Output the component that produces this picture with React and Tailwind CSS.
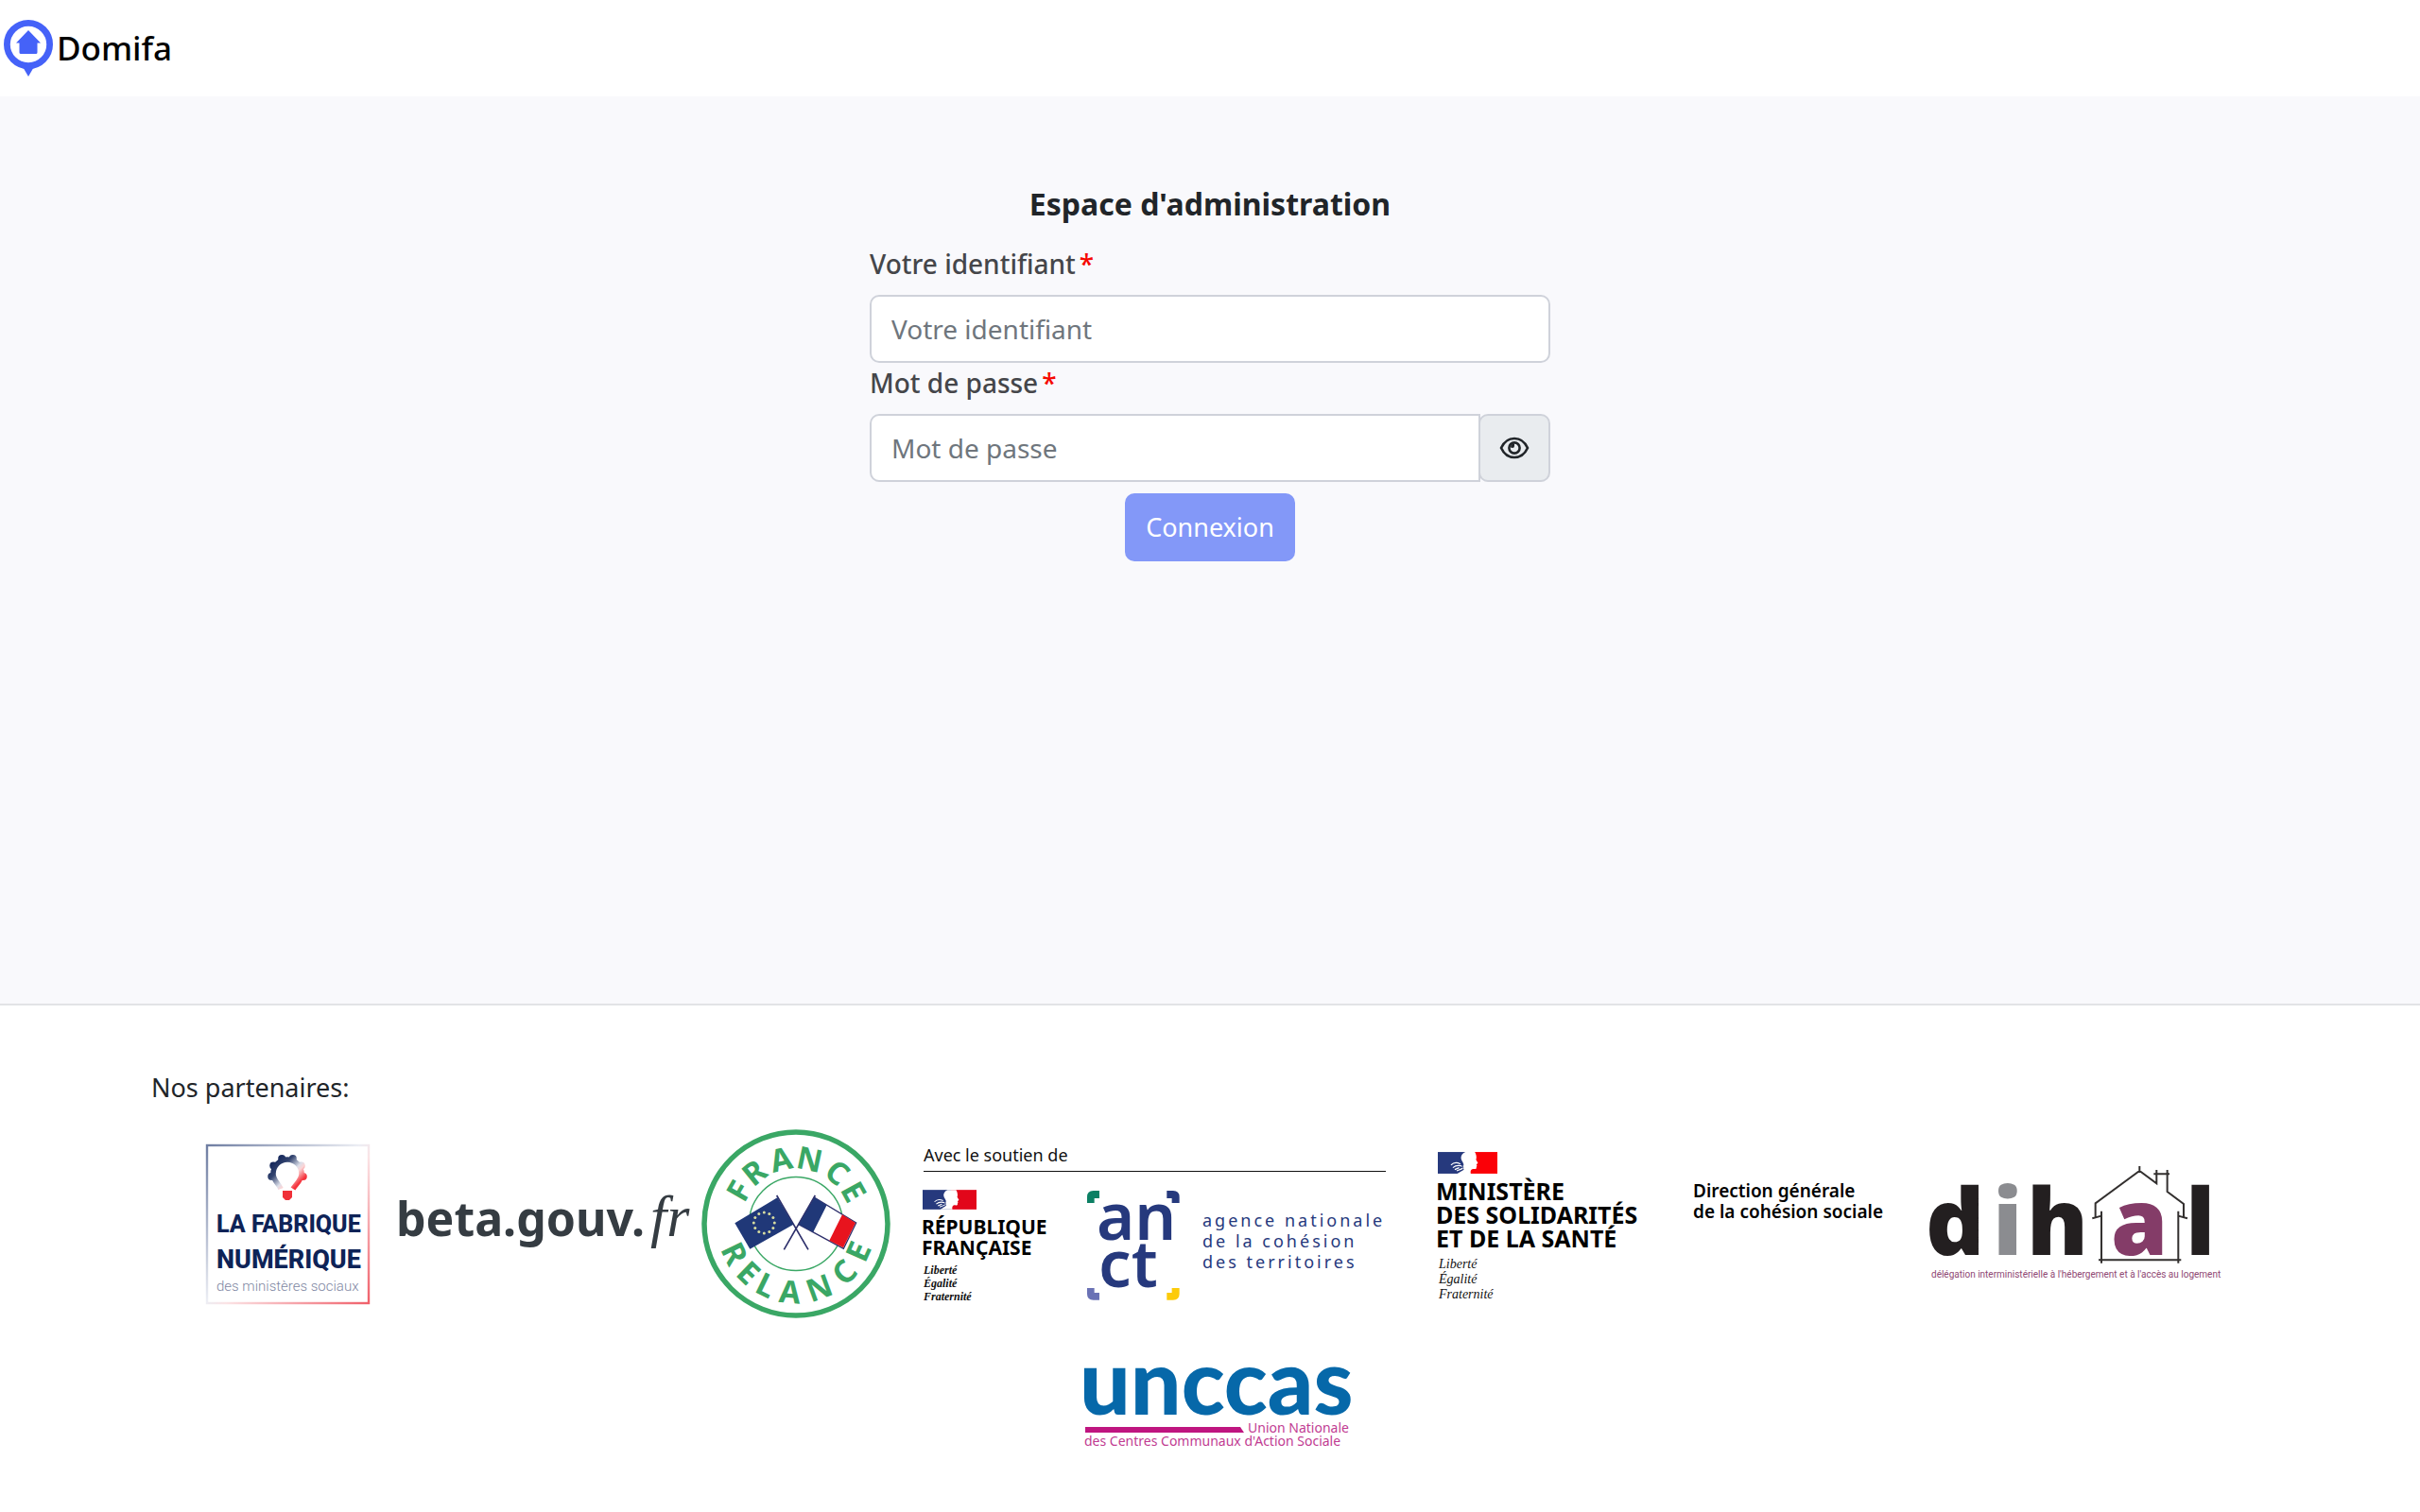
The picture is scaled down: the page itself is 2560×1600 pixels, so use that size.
const NAVY = '#26397d';

function PinLogo() {
  return (
    <svg width="52" height="60" viewBox="0 0 52 60" aria-hidden="true">
      <path d="M19 48 26 60 33 48Z" fill="#4562f8" />
      <circle cx="26" cy="26" r="22.6" fill="#fff" stroke="#4562f8" strokeWidth="6.8" />
      <path d="M26 11 39 24.500H35.500V34.500Q35.500 36 34 36H18Q16.500 36 16.500 34.500V24.500H13Z" fill="#4562f8" />
    </svg>
  );
}

function EyeIcon() {
  return (
    <svg width="32" height="24" viewBox="0 0 32 24" fill="none" stroke="#212529" strokeWidth="2.6" aria-hidden="true">
      <path d="M2 12C5 5.500 10 2 16 2s11 3.500 14 10c-3 6.500-8 10-14 10S5 18.500 2 12Z" />
      <circle cx="16" cy="12" r="5.600" />
      <path d="M12 11.500a4 4 0 0 1 4-4v2.500a2 2 0 0 1-2 2Z" fill="#212529" stroke="none" />
    </svg>
  );
}

function FabriqueLogo() {
  const teeth = [-190, -150, -110, -70, -30, 10];
  return (
    <svg width="196" height="208" viewBox="0 0 196 208" role="img" aria-label="La Fabrique numérique des ministères sociaux">
      <defs>
        <linearGradient id="frame" gradientUnits="userSpaceOnUse" x1="11" y1="20" x2="182" y2="187">
          <stop offset="0" stopColor="#6f7ea2" />
          <stop offset="0.48" stopColor="#eceef4" />
          <stop offset="0.55" stopColor="#fbe3e5" />
          <stop offset="1" stopColor="#f0606a" />
        </linearGradient>
        <linearGradient id="gear" gradientUnits="userSpaceOnUse" x1="80" y1="34" x2="112" y2="66">
          <stop offset="0" stopColor="#0c1f55" />
          <stop offset="0.3" stopColor="#33446f" />
          <stop offset="0.55" stopColor="#dcdfe9" />
          <stop offset="0.64" stopColor="#fbd5d6" />
          <stop offset="0.85" stopColor="#f5333c" />
        </linearGradient>
      </defs>
      <rect x="11" y="20" width="171" height="167" fill="none" stroke="url(#frame)" strokeWidth="2.4" />
      <g fill="url(#gear)">
        {teeth.map((a) => {
          const r = (a * Math.PI) / 180;
          return <circle key={a} cx={96 + 17 * Math.cos(r)} cy={50 + 17 * Math.sin(r)} r="4" />;
        })}
      </g>
      <path d="M89 66C87 61 81 57 81 50a15 15 0 0 1 30 0c0 7-6 11-9 16" fill="none" stroke="url(#gear)" strokeWidth="5.500" />
      <path d="M91 68H101V75L98 78H94L91 75Z" fill="#f03038" />
      <text x="21" y="112" fontSize="25" className="font-['Roboto'] font-extrabold" fill="#0e2357">LA FABRIQUE</text>
      <text x="21" y="150" fontSize="27" className="font-['Roboto'] font-extrabold" fill="#0e2357">NUMÉRIQUE</text>
      <text x="21" y="174" fontSize="15" className="font-['Roboto'] font-light" fill="#7f88a3">des ministères sociaux</text>
    </svg>
  );
}

function BetaLogo() {
  return (
    <svg width="334" height="208" viewBox="0 0 334 208" role="img" aria-label="beta.gouv.fr">
      <text x="15" y="116" fontSize="50" className="font-['Noto_Sans'] font-bold" fill="#353c42">beta.gouv.</text>
      <text x="284" y="116" fontSize="62" className="font-['Liberation_Serif'] italic" fill="#353c42">fr</text>
    </svg>
  );
}

const TOP = [['F', -60], ['R', -39], ['A', -13], ['N', 12], ['C', 39], ['E', 61]];
const BOTTOM = [['R', 64], ['E', 44], ['L', 26], ['A', 5], ['N', -20], ['C', -45], ['E', -66]];

function RelanceLogo() {
  const stars = Array.from({ length: 12 }, (_, i) => (i * Math.PI) / 6);
  return (
    <svg width="208" height="208" viewBox="0 0 208 208" role="img" aria-label="France Relance">
      <circle cx="104" cy="103" r="97" fill="#fff" stroke="#3aa765" strokeWidth="5.500" />
      <circle cx="104" cy="103" r="49.500" fill="none" stroke="#3aa765" strokeWidth="1.400" />
      {TOP.map(([c, a]) => (
        <text key={c} x="104" y="45" textAnchor="middle" fontSize="33" className="font-['Noto_Sans'] font-bold" fill="#3aa765" transform={`rotate(${a} 104 103)`}>{c}</text>
      ))}
      {BOTTOM.map(([c, a]) => (
        <text key={a} x="104" y="187" textAnchor="middle" fontSize="33" className="font-['Noto_Sans'] font-bold" fill="#3aa765" transform={`rotate(${a} 104 103)`}>{c}</text>
      ))}
      <g transform="translate(-8 -12) scale(0.3333)">
        <path d="M275 255 375 427M397 255 298 427" stroke="#2d2f6b" strokeWidth="5" fill="none" />
        <path d="M142 343 277 262 328 347 190 425Z" fill="#203878" />
        {stars.map((a) => (
          <circle key={a} cx={235 + 33 * Math.cos(a)} cy={342 + 33 * Math.sin(a)} r="4.500" fill="#d7dca0" />
        ))}
        <path d="M395 262 527 342 487 424 345 347Z" fill="#fff" stroke="#2d2f6b" strokeWidth="4" />
        <path d="M395 262 434 286 391 371 345 347Z" fill="#203878" />
        <path d="M483 316 525 342 486 421 442 398Z" fill="#e8141e" />
      </g>
    </svg>
  );
}

/* Flag with the Marianne profile, drawn on a 190 x 69 grid */
function MarianneFlag({ x, y, width, height, blue, red }) {
  return (
    <svg x={x} y={y} width={width} height={height} viewBox="0 0 190 69">
      <rect width="100" height="69" fill={blue} />
      <rect x="100" width="90" height="69" fill={red} />
      <path d="M88 0C78 4 74 11 74 19C74 26 80 32 82 38C84 45 76 50 84 54C80 60 70 64 62 69H105C103 60 106 55 112 54C121 55 124 54 123 48L125 44L123 40L128 35L122 25C125 16 122 6 118 0Z" fill="#fff" />
      <path d="M42 42C50 33 60 32 72 38M48 50C56 43 64 40 80 46M54 56 68 50M60 60C68 58 76 54 84 50" stroke="#fff" strokeWidth="3.500" fill="none" />
      <path d="M76 43C80 45 82 49 80 53" stroke={blue} strokeWidth="2.500" fill="none" />
    </svg>
  );
}

function Motto({ x, y, step, size, className }) {
  return ['Liberté', 'Égalité', 'Fraternité'].map((w, i) => (
    <text key={w} x={x} y={y + i * step} fontSize={size} className={className} fill="#111">{w}</text>
  ));
}

function AnctLogo() {
  return (
    <svg width="548" height="208" viewBox="0 0 548 208" role="img" aria-label="Avec le soutien de la République française et de l'Agence nationale de la cohésion des territoires">
      <text x="31" y="37" fontSize="18" className="font-['Noto_Sans']" fill="#111">Avec le soutien de</text>
      <rect x="31" y="47" width="489" height="1" fill="#111" />
      <MarianneFlag x="30" y="67" width="57" height="21" blue={NAVY} red="#e2061a" />
      <text x="29" y="114" fontSize="21" className="font-['Noto_Sans'] font-bold" fill="#000">RÉPUBLIQUE</text>
      <text x="29" y="136" fontSize="21" className="font-['Noto_Sans'] font-bold" fill="#000">FRANÇAISE</text>
      <Motto x={31} y={156} step={14} size={12} className="font-['Liberation_Serif'] italic font-bold" />
      <g transform="translate(14 8) scale(0.3333)">
        <path d="M609 180H590Q570 180 570 200V219H593V204H609Z" fill="#0c8064" />
        <path d="M823 180H843Q863 180 863 200V219H839V204H823Z" fill={NAVY} />
        <path d="M570 489H593V504H609V527H590Q570 527 570 507Z" fill="#6a72b5" />
        <path d="M863 489H839V504H823V527H843Q863 527 863 507Z" fill="#fccb0a" />
      </g>
      <text x="214" y="120" fontSize="69" className="font-['Noto_Sans'] font-semibold" fill={NAVY}>an</text>
      <text x="216" y="170" fontSize="69" className="font-['Noto_Sans'] font-semibold" fill={NAVY}>ct</text>
      <g className="font-['Noto_Sans'] tracking-[3px]" fill={NAVY} fontSize="18">
        <text x="326" y="106">agence nationale</text>
        <text x="326" y="128">de la cohésion</text>
        <text x="326" y="150">des territoires</text>
      </g>
    </svg>
  );
}

function MinistereLogo() {
  return (
    <svg width="524" height="208" viewBox="0 0 524 208" role="img" aria-label="Ministère des solidarités et de la santé, Direction générale de la cohésion sociale">
      <MarianneFlag x="27" y="27" width="63" height="23" blue={NAVY} red="#fb0007" />
      <g className="font-['Noto_Sans'] font-bold" fill="#000" fontSize="25">
        <text x="25" y="78">MINISTÈRE</text>
        <text x="25" y="103">DES SOLIDARITÉS</text>
        <text x="25" y="128">ET DE LA SANTÉ</text>
      </g>
      <Motto x={28} y={150} step={16} size={14} className="font-['Liberation_Serif'] italic" />
      <g className="font-['Noto_Sans'] font-semibold" fill="#000" fontSize="19">
        <text x="297" y="75">Direction générale</text>
        <text x="297" y="97">de la cohésion sociale</text>
      </g>
    </svg>
  );
}

function DihalLogo() {
  return (
    <svg width="334" height="208" viewBox="0 0 334 208" role="img" aria-label="Dihal, délégation interministérielle à l'hébergement et à l'accès au logement">
      <g className="font-['Noto_Sans'] font-black" fontSize="97" fill="#231f20">
        <text x="19" y="136">d</text>
        <text x="90" y="136" fill="#8b8c90">i</text>
        <text x="126" y="136">h</text>
        <text x="215" y="136" fill="#843c68">a</text>
        <text x="294" y="136">l</text>
      </g>
      <g transform="translate(2 18) scale(0.3333)" fill="none" stroke="#33302f" strokeWidth="6">
        <path d="M609 215V370H853V215M590 238V190L730 87L784 127V97H818V153L870 192V235M580 238 609 230M853 230 882 238M609 360V380M600 370H618M853 360V380M844 370H862M730 72V90M775 97H825M784 84V97M818 84V97" />
      </g>
      <text x="25" y="160" fontSize="10" className="font-['Roboto']" fill="#8f4873">délégation interministérielle à l'hébergement et à l'accès au logement</text>
    </svg>
  );
}

function UnccasLogo() {
  return (
    <svg width="320" height="128" viewBox="0 0 320 128" role="img" aria-label="UNCCAS, Union Nationale des Centres Communaux d'Action Sociale">
      <text x="22" y="73" fontSize="95" className="font-['Lato'] font-black" fill="#0668a9">unccas</text>
      <path d="M28 86H192L196 92H28Z" fill="#bf1580" />
      <g className="font-['Noto_Sans']" fill="#c13c92" fontSize="14">
        <text x="200" y="92">Union Nationale</text>
        <text x="27" y="106">des Centres Communaux d'Action Sociale</text>
      </g>
    </svg>
  );
}

function FieldLabel({ htmlFor, children }) {
  return (
    <label htmlFor={htmlFor} className="mb-3 block text-[28px] leading-[42px] font-medium text-[#45464a]">
      {children}
      <span className="ml-1 text-[#f60700]">*</span>
    </label>
  );
}

export default function App() {
  return (
    <div className="flex min-h-screen flex-col bg-white font-['Noto_Sans',sans-serif] text-[#212529]">
      <header className="flex h-[102px] items-center pl-1">
        <a href="#" className="flex items-center gap-1 text-[35px] leading-10 font-medium text-black">
          <PinLogo />
          Domifa
        </a>
      </header>

      <main className="flex flex-1 flex-col items-center bg-[#f9f9fc] px-4 pt-[94px]">
        <h1 className="mb-[22px] text-[32px] leading-10 font-bold">Espace d'administration</h1>
        <form className="flex w-full max-w-[720px] flex-col">
          <FieldLabel htmlFor="login">Votre identifiant</FieldLabel>
          <input
            id="login"
            type="text"
            placeholder="Votre identifiant"
            className="h-[72px] w-full rounded-[10px] border-2 border-[#cfd2da] bg-white px-[21px] text-[28px] placeholder:text-[#6f767d]"
          />
          <FieldLabel htmlFor="password">Mot de passe</FieldLabel>
          <div className="flex">
            <input
              id="password"
              type="password"
              placeholder="Mot de passe"
              className="h-[72px] min-w-0 flex-1 rounded-l-[10px] border-2 border-[#cfd2da] bg-white px-[21px] text-[28px] placeholder:text-[#6f767d]"
            />
            <button
              type="button"
              aria-label="Afficher le mot de passe"
              className="-ml-0.5 flex h-[72px] w-[76px] items-center justify-center rounded-[10px] border-2 border-[#cfd2da] bg-[#e9ecef]"
            >
              <EyeIcon />
            </button>
          </div>
          <button type="submit" className="mt-3 h-[72px] self-center rounded-[10px] bg-[#8398f8] px-[22px] text-[27px] text-white">
            Connexion
          </button>
        </form>
      </main>

      <footer className="border-t-2 border-[#e2e3e6] px-40 pt-[66px] pb-12">
        <p className="mb-5 text-[27px] leading-[42px]">Nos partenaires:</p>
        <div className="flex flex-wrap items-center justify-center gap-y-6">
          <FabriqueLogo />
          <BetaLogo />
          <RelanceLogo />
          <AnctLogo />
          <MinistereLogo />
          <DihalLogo />
          <UnccasLogo />
        </div>
      </footer>
    </div>
  );
}
